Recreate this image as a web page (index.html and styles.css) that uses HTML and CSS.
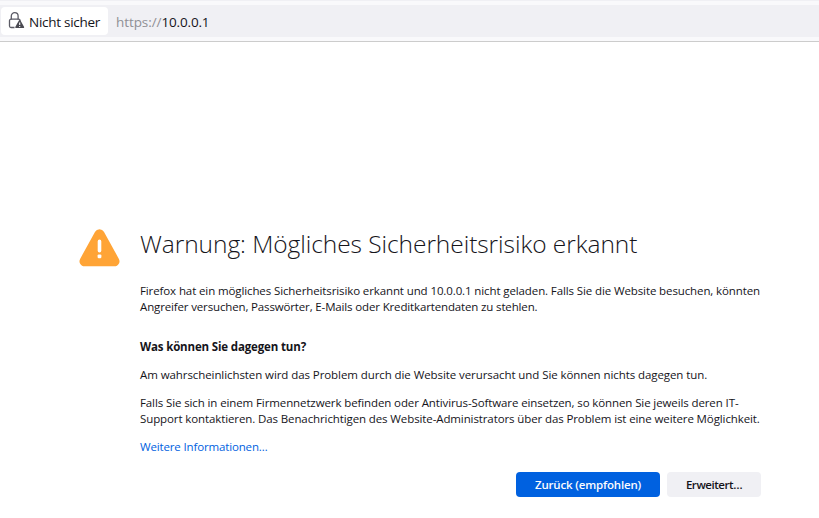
FILE: index.html
```
<!DOCTYPE html>
<html lang="de">
<head>
<meta charset="utf-8">
<title>Warnung: Mögliches Sicherheitsrisiko</title>
<link rel="stylesheet" href="styles.css">
</head>
<body>
<header class="toolbar">
  <div class="urlbar">
    <div class="identity">
      <svg class="lock" width="18" height="20" viewBox="0 0 18 20" fill="none">
        <path d="M3.3 8.5V5a3.4 3.4 0 0 1 6.8 0v3.5" stroke="#5b5b66" stroke-width="1.3"/>
        <path d="M12.2 9.7A1.5 1.5 0 0 0 10.7 8.2H3A1.5 1.5 0 0 0 1.5 9.7v5.3A1.5 1.5 0 0 0 3 16.5H6.5" stroke="#5b5b66" stroke-width="1.3"/>
        <path d="M10.9 9.4a.9.9 0 0 1 1.6 0l3.5 6.3a.9.9 0 0 1-.8 1.4H8.2a.9.9 0 0 1-.8-1.4z" fill="#4a4a52"/>
        <path d="M11.7 11.4v2.6M11.7 14.9v1.1" stroke="#fff" stroke-width="1.1"/>
      </svg>
      <span class="identity-label">Nicht sicher</span>
    </div>
    <div class="address"><span class="scheme">https://</span><span class="host">10.0.0.1</span></div>
  </div>
</header>
<main class="page">
  <svg class="warning" width="42" height="38" viewBox="0 0 42 38">
    <path d="M17.1 2.8a5 5 0 0 1 8.8 0l15 27.1a5 5 0 0 1-4.4 7.4H6.5a5 5 0 0 1-4.4-7.4z" fill="#ffa436"/>
    <path d="M21.5 12.4v9.4" stroke="#fff" stroke-width="3.6" stroke-linecap="round"/>
    <rect x="19.6" y="25.4" width="3.8" height="3.8" rx="1.2" fill="#fff"/>
  </svg>
  <div class="content">
    <h1 class="title">Warnung: Mögliches Sicherheitsrisiko erkannt</h1>
    <p class="intro">Firefox hat ein mögliches Sicherheitsrisiko erkannt und 10.0.0.1 nicht geladen. Falls Sie die Website besuchen, könnten<br><span class="tight">Angreifer versuchen, Passwörter, E-Mails oder Kreditkartendaten zu stehlen.</span></p>
    <h2 class="subtitle">Was können Sie dagegen tun?</h2>
    <p class="text loose">Am wahrscheinlichsten wird das Problem durch die Website verursacht und Sie können nichts dagegen tun.</p>
    <p class="text">Falls Sie sich in einem Firmennetzwerk befinden oder Antivirus-Software einsetzen, so können Sie jeweils deren IT-<br>Support kontaktieren. Das Benachrichtigen des Website-Administrators über das Problem ist eine weitere Möglichkeit.</p>
    <p class="text"><a class="link">Weitere Informationen…</a></p>
    <div class="buttons">
      <button class="btn primary">Zurück (empfohlen)</button>
      <button class="btn secondary">Erweitert…</button>
    </div>
  </div>
</main>
</body>
</html>
```
FILE: styles.css
```
* { box-sizing: border-box; }
body {
  margin: 0;
  background: #fff;
  color: #15141a;
  font-family: "Open Sans", "Noto Sans", sans-serif;
  font-size: 11.5px;
  line-height: 16px;
}
.toolbar {
  height: 42px;
  padding-top: 4px;
  background: #f9f9fb;
  border-top: 1px solid #f0f0f4;
  border-bottom: 1px solid #ccc;
}
.urlbar {
  display: flex;
  align-items: center;
  height: 32px;
  padding-left: 1px;
  background: #f0f0f4;
  font-size: 13.5px;
  line-height: 20px;
  white-space: nowrap;
}
.identity {
  display: flex;
  align-items: center;
  width: 107px;
  height: 28px;
  padding-left: 7px;
  border-radius: 4px;
  background: #fff;
}
.lock { flex: none; margin-right: 3px; }
.identity-label { padding-top: 2px; letter-spacing: -0.27px; }
.address { margin-left: 8px; padding-top: 2px; }
.scheme { color: #8f8f94; letter-spacing: -0.08px; }
.host { letter-spacing: -0.15px; }
.page {
  display: flex;
  gap: 20px;
  padding: 185px 0 0 78px;
}
.warning { flex: none; margin-top: 2px; }
.content { width: 621px; white-space: nowrap; }
.title {
  margin: 0 0 23px;
  font-size: 24.5px;
  font-weight: 300;
  line-height: 33px;
  letter-spacing: -0.06px;
}
.intro { margin: 0; letter-spacing: -0.11px; }
.tight { letter-spacing: -0.145px; }
.subtitle {
  margin: 24px 0 12px;
  font-size: 11.5px;
  font-weight: 700;
  letter-spacing: -0.15px;
}
.text { margin: 0 0 12px; letter-spacing: -0.108px; }
.text.loose { letter-spacing: -0.08px; }
.link { color: #0061e0; letter-spacing: -0.15px; }
.buttons {
  display: flex;
  justify-content: flex-end;
  gap: 7px;
  margin-top: 17px;
}
.btn {
  height: 25px;
  padding: 0;
  border: 0;
  border-radius: 4px;
  font: 600 11.5px/25px "Open Sans", sans-serif;
  letter-spacing: -0.17px;
}
.primary { width: 144px; background: #0061e0; color: #fbfbfe; }
.secondary { width: 94px; background: #f0f0f4; color: #15141a; letter-spacing: -0.45px; }
```
